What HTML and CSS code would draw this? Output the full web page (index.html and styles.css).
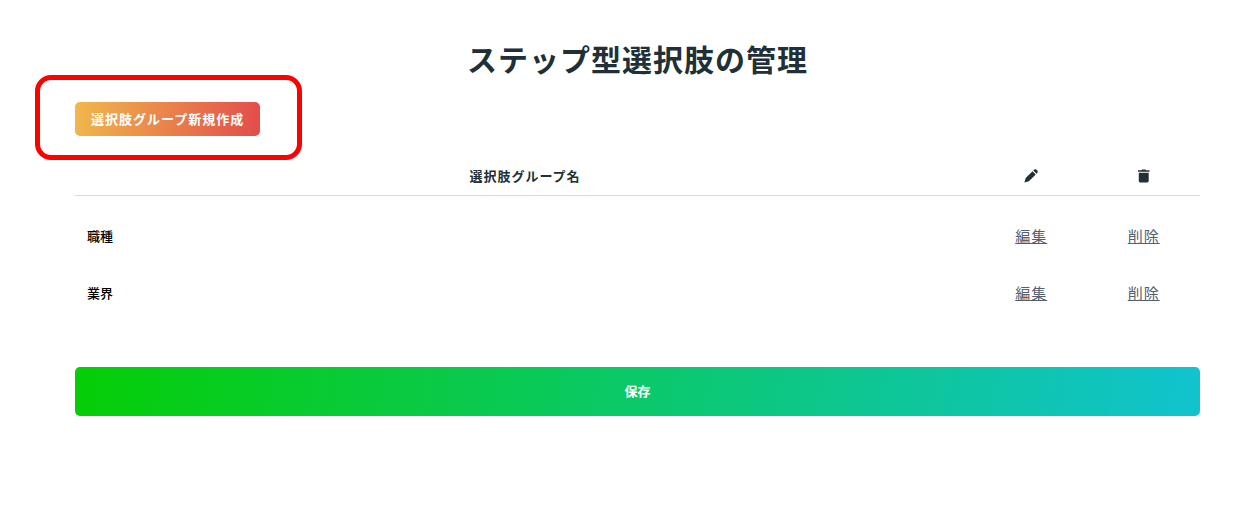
FILE: index.html
```html
<!DOCTYPE html>
<html lang="ja">
  <head>
    <meta charset="UTF-8" />
    <meta name="viewport" content="width=device-width, initial-scale=1.0" />
    <title>ステップ型選択肢の管理</title>
    <link rel="stylesheet" href="styles.css">
  </head>
  <body>
    <main class="container">
      <h1 class="page-title">ステップ型選択肢の管理</h1>

      <div class="create-area">
        <button type="button" class="btn btn-create">選択肢グループ新規作成</button>
      </div>

      <form class="group-form">
        <table class="group-table">
          <thead>
            <tr>
              <th class="col-name" scope="col">選択肢グループ名</th>
              <th class="col-action" scope="col" aria-label="編集">
                <svg class="icon" viewBox="0 0 14 14" aria-hidden="true">
                  <path d="M8.5 2.3 11.7 5.5 4.9 12.3 .4 13.6 1.7 9.1Z" />
                  <path d="M9.3 1.5 10.3.6Q11.6-.2 12.9 1.1 14.2 2.4 13.4 3.7L12.5 4.7Z" />
                </svg>
              </th>
              <th class="col-action" scope="col" aria-label="削除">
                <svg class="icon" viewBox="0 0 14 14" aria-hidden="true">
                  <path d="M1 1.3H4.5L5.2.5H8.3L9 1.3H12.5V2.8H1Z" />
                  <path d="M1.8 3.8H11.7V12Q11.7 13.4 10.3 13.4H3.2Q1.8 13.4 1.8 12Z" />
                </svg>
              </th>
            </tr>
          </thead>
          <tbody>
            <tr>
              <td class="group-name">職種</td>
              <td><a class="action-link" href="#">編集</a></td>
              <td><a class="action-link" href="#">削除</a></td>
            </tr>
            <tr>
              <td class="group-name">業界</td>
              <td><a class="action-link" href="#">編集</a></td>
              <td><a class="action-link" href="#">削除</a></td>
            </tr>
          </tbody>
        </table>

        <button type="submit" class="btn btn-save">保存</button>
      </form>
    </main>
  </body>
</html>
```
FILE: styles.css
```css
* {
  box-sizing: border-box;
}

body {
  margin: 0;
  font-family: "Noto Sans CJK JP", sans-serif;
  font-size: 15px;
  line-height: 24px;
  letter-spacing: 1px;
  color: #213036;
  background: #fff;
}

.container {
  padding: 38px 48px 40px 75px;
}

.page-title {
  margin: 0 0 24px;
  font-size: 30px;
  font-weight: 600;
  line-height: 40px;
  text-align: center;
}

.btn {
  padding: 0 16px 2px;
  border: none;
  border-radius: 5px;
  color: #fff;
  font-family: inherit;
  font-size: 13px;
  font-weight: 700;
  cursor: pointer;
}

.create-area {
  position: relative;
  width: fit-content;
}

/* 新規作成ボタンの強調枠 */
.create-area::before {
  content: "";
  position: absolute;
  inset: -27px -42px -24px -40px;
  border: 5px solid #f00;
  border-radius: 16px;
  pointer-events: none;
}

.btn-create {
  display: block;
  height: 34px;
  letter-spacing: 1px;
  background: linear-gradient(100deg, #f0b94b, #e34b4b);
}

.group-table {
  width: 100%;
  margin-top: 20px;
  border-collapse: collapse;
  table-layout: fixed;
  text-align: center;
}

.group-table th {
  height: 39px;
  padding: 2px 0 0;
  border-bottom: 1px solid #d9d9d9;
  font-size: 13px;
  font-weight: 600;
}

.group-table td {
  height: 57px;
  padding: 0;
}

/* 見出しと一覧の間の余白 */
.group-table tbody::before {
  content: "";
  display: table-row;
  height: 12px;
}

.col-name {
  width: 80%;
}

.col-action {
  width: 10%;
}

.icon {
  display: block;
  width: 14px;
  height: 14px;
  margin: 0 auto;
  fill: currentColor;
}

.group-table .group-name {
  padding-left: 12px;
  color: #000;
  font-size: 13px;
  font-weight: 500;
  letter-spacing: normal;
  text-align: left;
}

.action-link {
  color: #55606e;
  text-decoration: underline;
}

.btn-save {
  display: block;
  width: 100%;
  height: 49px;
  margin-top: 46px;
  background: linear-gradient(100deg, #05ce05, #11c3cf);
}
```
